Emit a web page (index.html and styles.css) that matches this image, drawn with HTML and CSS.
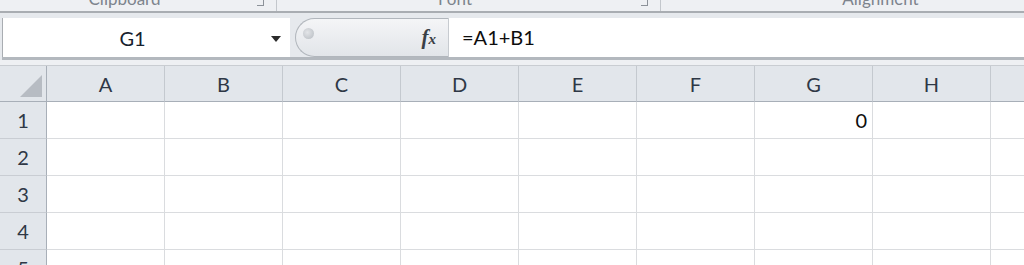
FILE: index.html
```html
<!DOCTYPE html>
<html>
  <head>
    <title>Book1 - Excel</title>
    <link rel="stylesheet" href="styles.css">
  </head>
  <body>
    <div class="ribbon">
      <div class="group g-clip"><span class="label">Clipboard</span><span class="launch"></span></div>
      <div class="group g-font"><span class="label">Font</span><span class="launch"></span></div>
      <div class="group g-align"><span class="label">Alignment</span></div>
    </div>

    <div class="fbar">
      <div class="fbar-row">
        <div class="namebox">
          <span class="name">G1</span>
          <svg class="drop" width="10" height="6" viewBox="0 0 10 6"><path d="M0 0H10L5 6Z" fill="#2b2b2b"/></svg>
        </div>
        <div class="pill">
          <span class="knob"></span>
          <span class="fx"><i>f</i><i class="x">x</i></span>
        </div>
        <div class="formula">=A1+B1</div>
      </div>
    </div>

    <div class="sheet">
      <div class="hdr corner"><span class="tri"></span></div>
      <div class="hdr col">A</div>
      <div class="hdr col">B</div>
      <div class="hdr col">C</div>
      <div class="hdr col">D</div>
      <div class="hdr col">E</div>
      <div class="hdr col">F</div>
      <div class="hdr col">G</div>
      <div class="hdr col">H</div>
      <div class="hdr col"></div>

      <div class="hdr row">1</div>
      <div class="cell"></div><div class="cell"></div><div class="cell"></div><div class="cell"></div>
      <div class="cell"></div><div class="cell"></div><div class="cell num">0</div><div class="cell"></div><div class="cell"></div>

      <div class="hdr row">2</div>
      <div class="cell"></div><div class="cell"></div><div class="cell"></div><div class="cell"></div>
      <div class="cell"></div><div class="cell"></div><div class="cell"></div><div class="cell"></div><div class="cell"></div>

      <div class="hdr row">3</div>
      <div class="cell"></div><div class="cell"></div><div class="cell"></div><div class="cell"></div>
      <div class="cell"></div><div class="cell"></div><div class="cell"></div><div class="cell"></div><div class="cell"></div>

      <div class="hdr row">4</div>
      <div class="cell"></div><div class="cell"></div><div class="cell"></div><div class="cell"></div>
      <div class="cell"></div><div class="cell"></div><div class="cell"></div><div class="cell"></div><div class="cell"></div>

      <div class="hdr row">5</div>
      <div class="cell"></div><div class="cell"></div><div class="cell"></div><div class="cell"></div>
      <div class="cell"></div><div class="cell"></div><div class="cell"></div><div class="cell"></div><div class="cell"></div>
    </div>
  </body>
</html>
```

FILE: styles.css
```css
html {
  font-family: Lato, "Open Sans", sans-serif;
}

body {
  margin: 0;
  width: 1024px;
  height: 265px;
  overflow: hidden;
  background-color: white;
}

/* ribbon group labels, cut off at the top */
.ribbon {
  display: flex;
  height: 11px;
  overflow: hidden;
  background-color: #eef0f3;
  border-bottom: 2px solid #a9adb2;
}

.group {
  position: relative;
  flex: none;
  display: flex;
  justify-content: center;
  border-right: 1px solid #c3c7cc;
  box-sizing: border-box;
}

.g-clip {
  width: 277px;
  padding-right: 27px;
}

.g-font {
  width: 384px;
  padding-right: 27px;
}

.g-align {
  width: 440px;
}

.label {
  margin-top: -10px;
  font-size: 17px;
  line-height: 18px;
  color: #7d848d;
}

.launch {
  position: absolute;
  right: 12px;
  top: 0;
  width: 6px;
  height: 5px;
  border-right: 1px solid #8c9299;
  border-bottom: 1px solid #8c9299;
}

/* formula bar */
.fbar {
  background-color: #e6e9ed;
  padding: 5px 0 0 2px;
  border-bottom: 5px solid #eef0f3;
}

.fbar-row {
  display: flex;
  height: 39px;
  border-bottom: 3px solid #b3b8be;
}

.namebox {
  position: relative;
  width: 287px;
  background-color: white;
  border-left: 1px solid #a9adb2;
  display: flex;
  align-items: center;
  justify-content: center;
}

.name {
  font-size: 20px;
  color: #17212e;
  margin-right: 28px;
}

.drop {
  position: absolute;
  right: 9px;
  top: 18px;
}

.pill {
  margin-left: 5px;
  width: 153px;
  box-sizing: border-box;
  border: 1px solid #b1b6bc;
  border-right: none;
  border-radius: 20px 0 0 20px;
  background: linear-gradient(#f4f5f7, #e2e5e9);
  display: flex;
  align-items: center;
  justify-content: space-between;
  padding: 0 12px 0 7px;
}

.knob {
  width: 11px;
  height: 11px;
  margin-top: -8px;
  border-radius: 50%;
  background: radial-gradient(circle at 40% 40%, #e3e5e8, #b6bbc1);
}

.fx {
  font-family: "Liberation Serif", serif;
  font-weight: bold;
  font-size: 21px;
  color: #3a3f46;
}

.fx .x {
  font-size: 15px;
}

.formula {
  flex: 1;
  background-color: white;
  border-left: 1px solid #c7cbd0;
  padding-left: 13px;
  font-size: 20px;
  line-height: 39px;
  color: #0d0d0d;
}

/* sheet grid */
.sheet {
  display: grid;
  grid-template-columns: 47px repeat(9, 118px);
  grid-template-rows: 36px repeat(5, 37px);
  border-top: 1px solid #c9cdd2;
}

.hdr {
  background-color: #e2e6eb;
  color: #2f3846;
  font-size: 20px;
  display: flex;
  align-items: center;
  justify-content: center;
  box-sizing: border-box;
}

.col {
  border-right: 1px solid #c4c9cf;
  border-bottom: 1px solid #a8afb8;
}

.corner {
  position: relative;
  border-right: 1px solid #a8afb8;
  border-bottom: 1px solid #a8afb8;
}

.tri {
  position: absolute;
  right: 4px;
  bottom: 4px;
  width: 0;
  height: 0;
  border-left: 22px solid transparent;
  border-bottom: 22px solid #b7bcc3;
}

.row {
  border-right: 1px solid #a8afb8;
  border-bottom: 1px solid #c9cdd3;
}

.cell {
  border-right: 1px solid #dadcdf;
  border-bottom: 1px solid #dadcdf;
  box-sizing: border-box;
  font-size: 20px;
  color: #0d0d0d;
  display: flex;
  align-items: center;
  justify-content: flex-end;
  padding-right: 5px;
}
```
